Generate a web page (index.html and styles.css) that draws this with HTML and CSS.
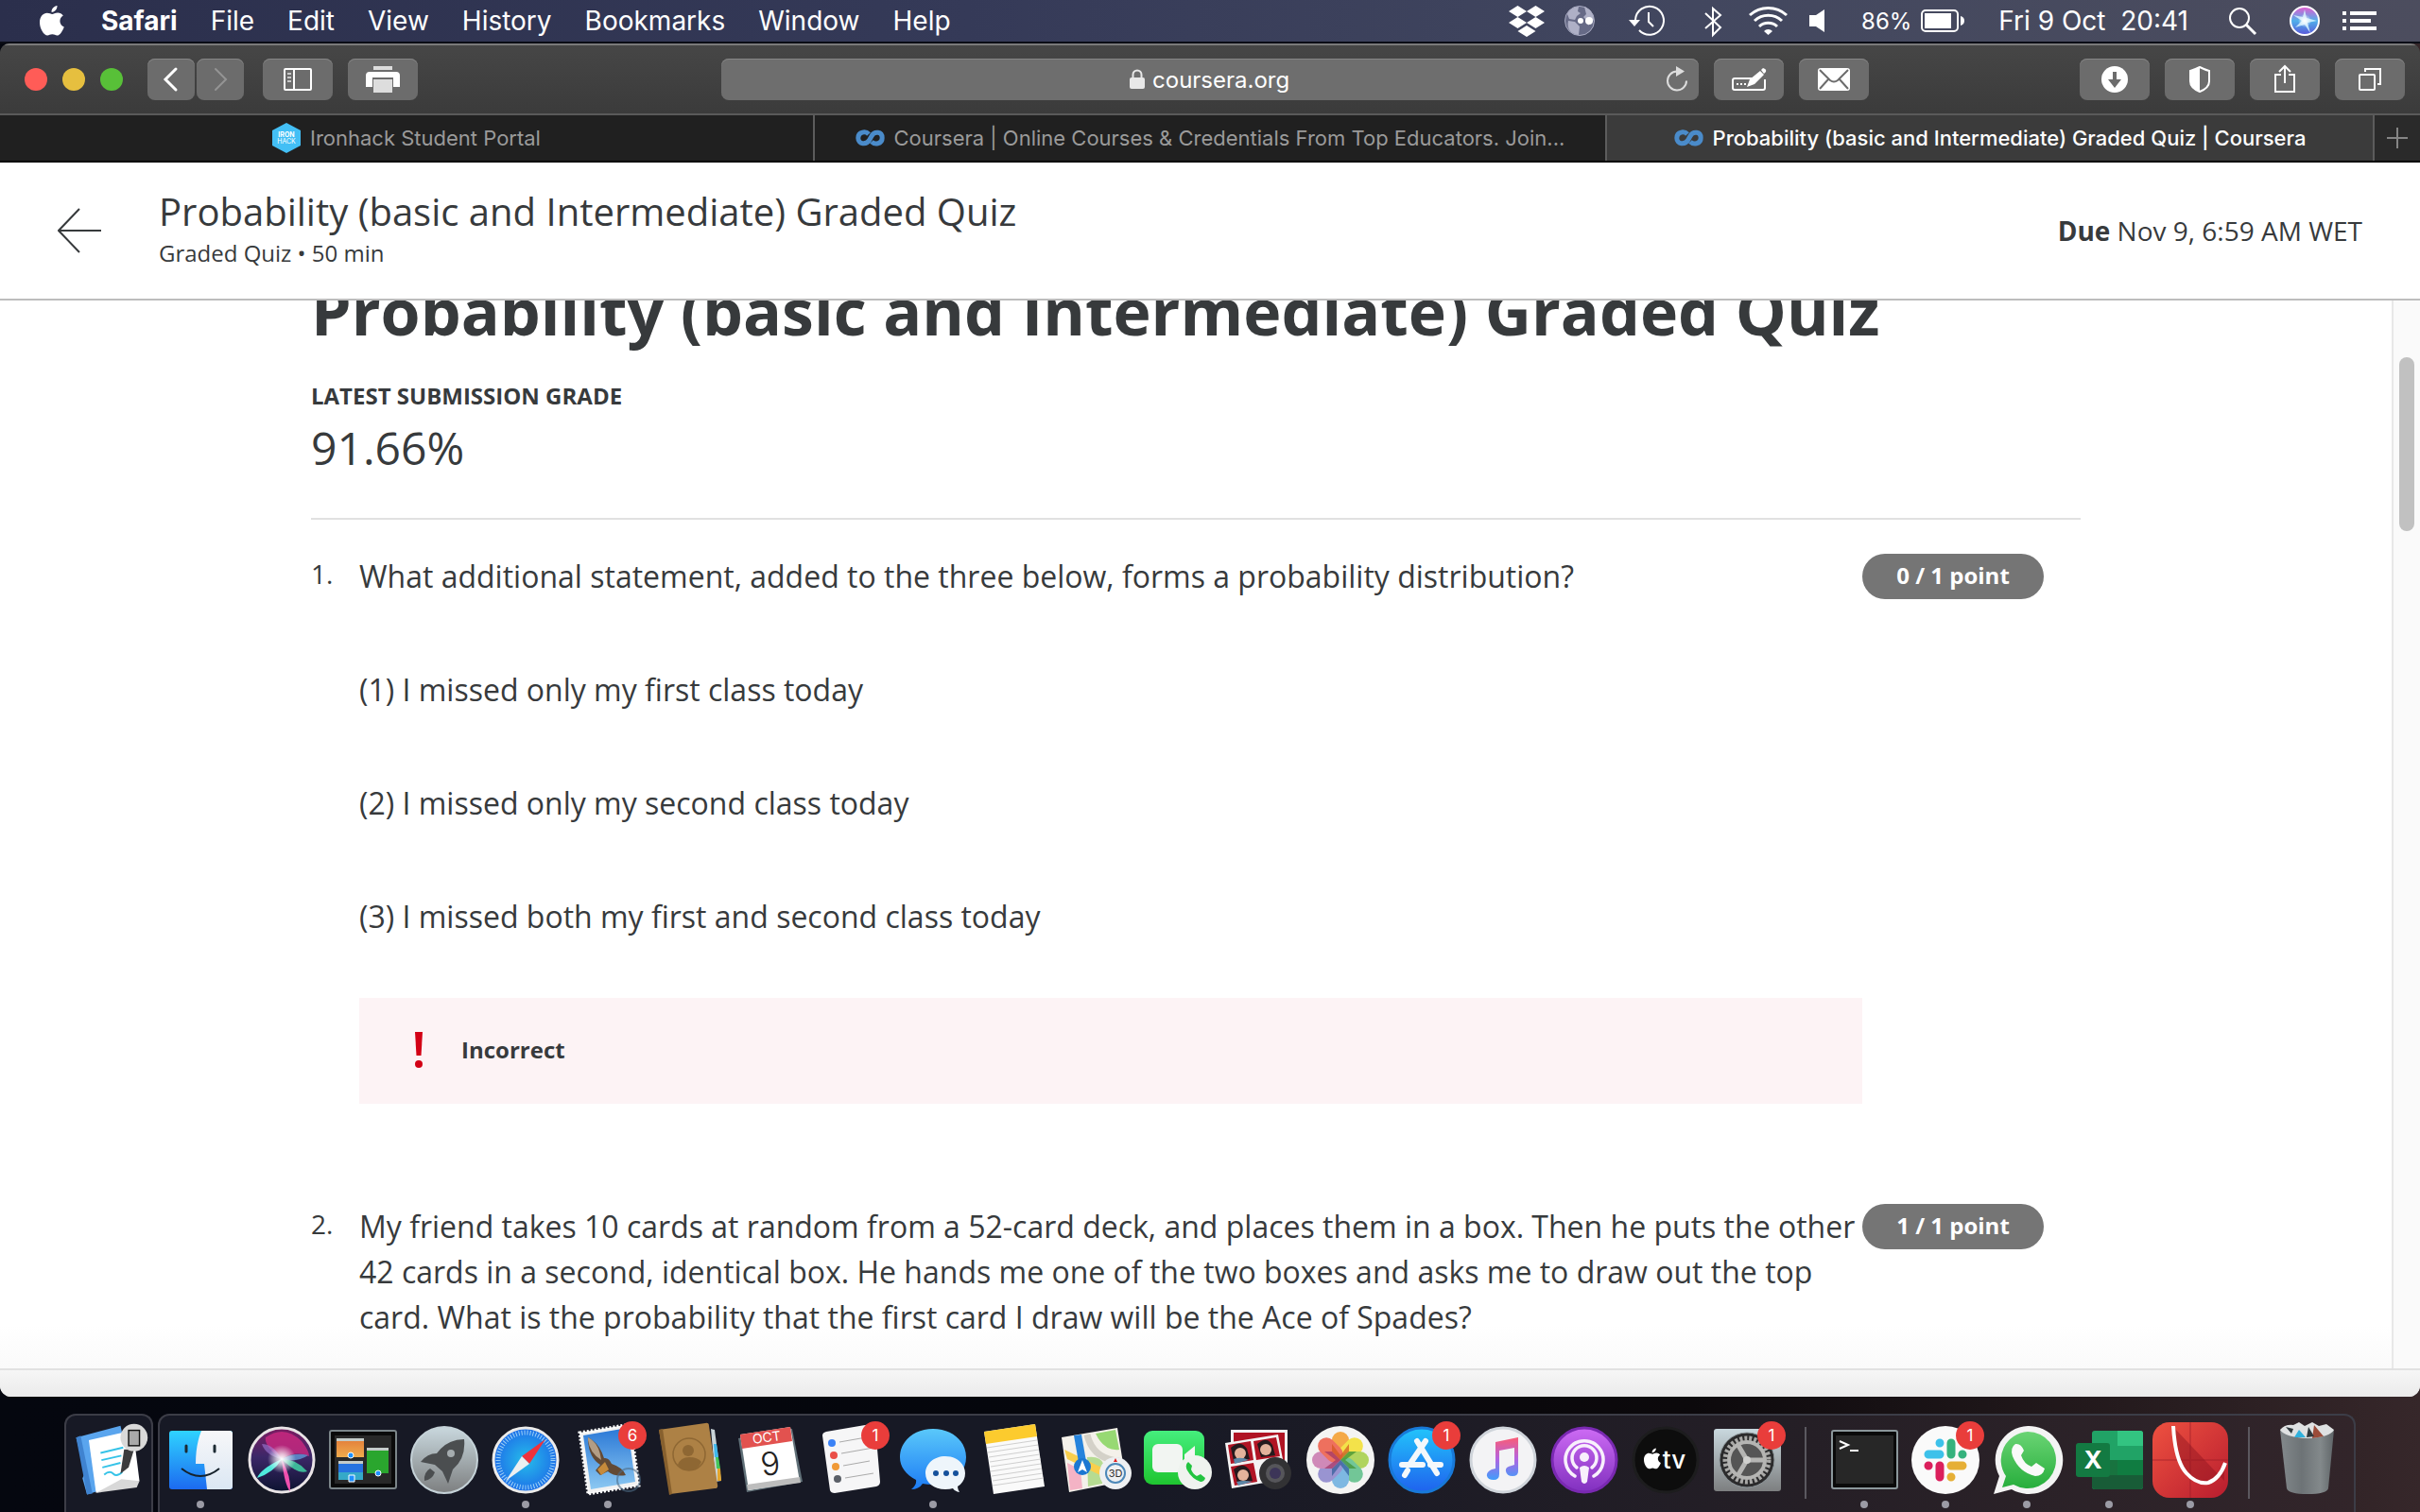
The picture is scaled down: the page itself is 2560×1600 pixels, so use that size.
FILE: index.html
```html
<!DOCTYPE html>
<html lang="en">
<head>
<meta charset="utf-8">
<title>Probability (basic and Intermediate) Graded Quiz | Coursera</title>
<link rel="stylesheet" href="styles.css">
</head>
<body>
<svg class="defs" aria-hidden="true">
  <defs>
    <symbol id="coursera" viewBox="0 0 31 18"><path d="M14 5C11 1.500 2.800 2 2.800 9s9 7.500 12 2L17 7C20 1.500 28.200 2 28.200 9S20 16 17 13" fill="none" stroke="#4a8bca" stroke-width="5"/></symbol>
    <symbol id="apple" viewBox="0 0 26 32"><path d="M18.500 0c.3 3.600-2.800 7-6 6.800C12.200 3.500 15.300.4 18.500 0zM13.200 9c1.300 0 3-1.500 6-1.500 2.200 0 4.300 1.100 5.600 2.900-5 3-4.200 10 1 12-1.600 4.500-4.500 9.100-7.400 9.100-1.900 0-2.700-1.200-5.100-1.200S10 31.500 8.200 31.500C4.500 31.500 0 24.500 0 17.800c0-6.500 4-10 7.700-10C10.200 7.800 12 9 13.200 9z" fill="#fff"/></symbol>
    <linearGradient id="gFinder" x1="0" y1="0" x2="0" y2="1"><stop offset="0" stop-color="#2fd3ff"/><stop offset="1" stop-color="#1c6af0"/></linearGradient>
    <linearGradient id="gFace" x1="0" y1="0" x2="0" y2="1"><stop offset="0" stop-color="#f7f7f9"/><stop offset="1" stop-color="#dbe7f3"/></linearGradient>
    <linearGradient id="gGrey" x1="0" y1="0" x2="0" y2="1"><stop offset="0" stop-color="#c9d8de"/><stop offset="1" stop-color="#7d7f80"/></linearGradient>
    <radialGradient id="gSafari"><stop offset="0" stop-color="#25bdea"/><stop offset="1" stop-color="#1e6fe8"/></radialGradient>
    <linearGradient id="gSiri" x1="0" y1="0" x2="0" y2="1"><stop offset="0" stop-color="#7c1c62"/><stop offset=".45" stop-color="#3c2768"/><stop offset="1" stop-color="#0c1330"/></linearGradient>
    <radialGradient id="gGlow"><stop offset="0" stop-color="#fff"/><stop offset=".35" stop-color="#fff" stop-opacity=".7"/><stop offset="1" stop-color="#fff" stop-opacity="0"/></radialGradient>
    <linearGradient id="gSiriSmall" x1="0" y1="0" x2="0" y2="1"><stop offset="0" stop-color="#e75ad0"/><stop offset=".5" stop-color="#4fb0ea"/><stop offset="1" stop-color="#5a55d8"/></linearGradient>
    <linearGradient id="gBlue" x1="0" y1="0" x2="0" y2="1"><stop offset="0" stop-color="#5ac8fa"/><stop offset="1" stop-color="#1d7cf5"/></linearGradient>
    <linearGradient id="gStore" x1="0" y1="0" x2="0" y2="1"><stop offset="0" stop-color="#22c4fb"/><stop offset="1" stop-color="#1f62ee"/></linearGradient>
    <linearGradient id="gGreen" x1="0" y1="0" x2="0" y2="1"><stop offset="0" stop-color="#45ee7d"/><stop offset="1" stop-color="#1fc530"/></linearGradient>
    <linearGradient id="gWhats" x1="0" y1="0" x2="0" y2="1"><stop offset="0" stop-color="#6ad474"/><stop offset="1" stop-color="#27ae3c"/></linearGradient>
    <linearGradient id="gPod" x1="0" y1="0" x2="0" y2="1"><stop offset="0" stop-color="#cd6bf4"/><stop offset="1" stop-color="#8130bf"/></linearGradient>
    <linearGradient id="gNote" x1="0" y1="0" x2="0" y2="1"><stop offset="0" stop-color="#fb5c74"/><stop offset=".5" stop-color="#b463e0"/><stop offset="1" stop-color="#3f9dfb"/></linearGradient>
    <linearGradient id="gRed" x1="0" y1="0" x2="1" y2="1"><stop offset="0" stop-color="#ee5140"/><stop offset="1" stop-color="#b81d2e"/></linearGradient>
    <linearGradient id="gOrange" x1="0" y1="0" x2="0" y2="1"><stop offset="0" stop-color="#e27c39"/><stop offset="1" stop-color="#f0ac4d"/></linearGradient>
    <linearGradient id="gSky" x1="0" y1="0" x2="0" y2="1"><stop offset="0" stop-color="#2a78d6"/><stop offset="1" stop-color="#8cc8f2"/></linearGradient>
    <linearGradient id="gTrash" x1="0" y1="0" x2="1" y2="0"><stop offset="0" stop-color="#83898c"/><stop offset=".4" stop-color="#6d7376"/><stop offset=".75" stop-color="#83898b"/><stop offset="1" stop-color="#5f6568"/></linearGradient>
  </defs>
</svg>

<header class="menubar">
  <nav class="menus" aria-label="Menu bar">
    <button class="apple-menu" aria-label="Apple"><svg class="apple"><use href="#apple"/></svg></button>
    <button class="app-name">Safari</button>
    <button>File</button>
    <button>Edit</button>
    <button>View</button>
    <button>History</button>
    <button>Bookmarks</button>
    <button>Window</button>
    <button>Help</button>
  </nav>
  <div class="status">
    <svg width="58" height="44" viewBox="0 0 58 44" fill="#fff"><path d="M10 12l9.500-6 9.500 6-9.500 6zM29 12l9.500-6 9.500 6-9.500 6zM10 24l9.500-6 9.500 6-9.500 6zM29 24l9.500-6 9.500 6-9.500 6zM19.500 33l9.500-6 9.500 6-9.500 6z"/></svg>
    <svg width="55" height="44" viewBox="0 0 55 44"><circle cx="27" cy="22" r="15.500" fill="#666a86" stroke="#a9abc2"/><path d="M14 15c2-5 7-8 12-8l-1 5 3 2-4 3-2 4-6-1zM15 22l7 1 5 5-1 9C18 36 13 31 15 22zM32 7c6 2 10 8 10 14l-6 6-1-5-4-4 3-3z" fill="#aeb0c6"/><circle cx="28" cy="22" r="3" fill="#fff"/><circle cx="37" cy="22" r="4" fill="#fff"/></svg>
    <svg width="91" height="44" viewBox="0 0 91 44" fill="none" stroke="#fff" stroke-width="2"><path d="M31 21a15 15 0 1 1 4 11"/><path d="M24 21h12l-6 7z" fill="#fff" stroke="none"/><path d="M45 13v10l5 5"/></svg>
    <svg width="52" height="44" viewBox="0 0 52 44" fill="none" stroke="#fff" stroke-width="2"><path d="M14 14l16 15-8 8V9l8 7-16 14"/></svg>
    <svg width="62" height="44" viewBox="0 0 62 44" fill="none" stroke="#fff" stroke-width="3"><path d="M9 16a29 29 0 0 1 39 0M14 22a21 21 0 0 1 29 0M19 28a14 14 0 0 1 19 0"/><path d="M24 33a6 6 0 0 1 9 0l-4.500 4z" fill="#fff" stroke="none"/></svg>
    <svg width="65" height="44" viewBox="0 0 65 44" fill="#fff"><path d="M10 16h7l9-6v24l-9-6h-7z"/></svg>
    <span class="percent">86%</span>
    <svg width="48" height="44" viewBox="0 0 48 44"><rect x="1" y="11" width="38" height="22" rx="4" fill="none" stroke="#fff" stroke-width="2"/><path d="M4 14h28v16H4z" fill="#fff"/><path d="M42 17q4 1 4 5t-4 5z" fill="#fff"/></svg>
    <time class="clock">Fri 9 Oct&nbsp; 20:41</time>
    <svg width="75" height="44" viewBox="0 0 75 44" fill="none" stroke="#fff"><circle cx="34" cy="19" r="10" stroke-width="2"/><path d="M41 26l10 10" stroke-width="3"/></svg>
    <svg width="56" height="44" viewBox="0 0 56 44"><circle cx="28" cy="22" r="15" fill="url(#gSiriSmall)" stroke="#fff" stroke-width="2"/><path d="M28 10l2 9 11 3-10 2 3 11-6-9-10 3 7-7-9-6 10 2z" fill="#d5f3ff" opacity=".85"/><circle cx="28" cy="22" r="7" fill="url(#gGlow)"/></svg>
    <svg width="60" height="44" viewBox="0 0 60 44" fill="#fff"><path d="M12 12h4v4h-4zM20 12h28v4H20zM12 20h4v4h-4zM20 20h22v4H20zM12 28h4v4h-4zM20 28h28v4H20z"/></svg>
  </div>
</header>

<main class="window">
  <div class="toolbar">
    <div class="lights"><button class="close" aria-label="Close"></button><button class="minimise" aria-label="Minimise"></button><button class="zoom" aria-label="Zoom"></button></div>
    <div class="history">
      <button class="tool half" aria-label="Back"><svg width="50" height="44" viewBox="0 0 50 44" fill="none" stroke="#fff" stroke-width="3" stroke-linecap="round"><path d="M30 11L19 22l11 11"/></svg></button>
      <button class="tool half" aria-label="Forward"><svg width="50" height="44" viewBox="0 0 50 44" fill="none" stroke="#949494" stroke-width="2" stroke-linecap="round"><path d="M20 11l11 11-11 11"/></svg></button>
    </div>
    <div class="group">
      <button class="tool" aria-label="Sidebar"><svg width="74" height="44" viewBox="0 0 74 44" fill="none" stroke="#fff" stroke-width="2"><rect x="23" y="11" width="28" height="22" rx="1"/><path d="M33 11v22"/><path d="M26 16h4M26 20h4M26 24h4" stroke="#c8c8c8"/></svg></button>
      <button class="tool" aria-label="Print"><svg width="74" height="44" viewBox="0 0 74 44"><path d="M27 8h20v4H27z" fill="#ddd"/><path d="M23 14h28q4 0 4 4v12h-7V20H26v10h-7V18q0-4 4-4z" fill="#fff"/><path d="M27 22h20v14H27z" fill="#ddd"/></svg></button>
    </div>
    <div class="space-left"></div>
    <div class="address">
      <svg width="16" height="22" viewBox="0 0 16 22"><rect y="9" width="16" height="12" rx="2" fill="#e8e8e8"/><path d="M3.500 10V6a4.500 4.500 0 0 1 9 0v4" fill="none" stroke="#e8e8e8" stroke-width="2"/></svg>
      <input type="text" value="coursera.org" aria-label="Address">
      <button class="reload" aria-label="Reload"><svg width="24" height="28" viewBox="0 0 24 28"><path d="M12 5.500a10 10 0 1 0 10 10" fill="none" stroke="#ddd" stroke-width="2"/><path d="M11 0l9 5.500-9 5.500z" fill="#ddd"/></svg></button>
    </div>
    <div class="group extensions">
      <button class="tool" aria-label="Fill form"><svg width="74" height="44" viewBox="0 0 74 44" fill="none" stroke="#fff" stroke-width="2"><path d="M41 21H22q-2 0-2 2v8q0 2 2 2h30q2 0 2-2v-9"/><path d="M24 27h2M28 27h2M32 27h2"/><path d="M35 30l3-8 11-9 4 4-10 10zM50 12l2-2q4 1 3 4l-2 2z" fill="#fff" stroke="none"/></svg></button>
      <button class="tool" aria-label="Mail"><svg width="74" height="44" viewBox="0 0 74 44"><rect x="20" y="10" width="34" height="24" rx="3" fill="#fff"/><path d="M22 12l11 11q4 3 8 0l11-11M22 32l9-10M52 32l-9-10" fill="none" stroke="#6c6c6c" stroke-width="2"/></svg></button>
    </div>
    <div class="space-right"></div>
    <div class="group">
      <button class="tool" aria-label="Downloads"><svg width="74" height="44" viewBox="0 0 74 44"><circle cx="37" cy="22" r="14" fill="#fff"/><path d="M35 14h4v8h5l-7 9-7-9h5z" fill="#6c6c6c"/></svg></button>
      <button class="tool" aria-label="Privacy"><svg width="74" height="44" viewBox="0 0 74 44"><path d="M37 9q6 3 10 4v11q0 7-10 11-10-4-10-11V13q4-1 10-4z" fill="none" stroke="#fff" stroke-width="2"/><path d="M37 9v26q-10-4-10-11V13q4-1 10-4z" fill="#fff"/></svg></button>
      <button class="tool" aria-label="Share"><svg width="74" height="44" viewBox="0 0 74 44" fill="none" stroke="#fff" stroke-width="2"><path d="M33 17h-6v18h20V17h-6M37 26V8M31 14l6-6 6 6"/></svg></button>
      <button class="tool" aria-label="Show tabs"><svg width="74" height="44" viewBox="0 0 74 44" fill="none" stroke="#fff" stroke-width="2"><rect x="26" y="17" width="16" height="16" rx="1"/><path d="M32 14v-3h16v16h-3"/></svg></button>
    </div>
  </div>

  <nav class="tabs" aria-label="Tabs">
    <a class="tab first" href="#"><svg width="30" height="32" viewBox="0 0 30 32"><path d="M15 0l15 8v16l-15 8L0 24V8z" fill="#43bff5"/><text x="15" y="15" class="favtext bold">IRON</text><text x="15" y="22" class="favtext">HACK</text></svg><span>Ironhack Student Portal</span></a>
    <a class="tab second" href="#"><svg width="31" height="18"><use href="#coursera"/></svg><span>Coursera | Online Courses &amp; Credentials From Top Educators. Join...</span></a>
    <a class="tab third active" href="#"><svg width="31" height="18"><use href="#coursera"/></svg><span>Probability (basic and Intermediate) Graded Quiz | Coursera</span></a>
    <button class="new-tab" aria-label="New tab"><svg width="22" height="22" viewBox="0 0 22 22" stroke="#858585" stroke-width="2"><path d="M11 0v22M0 11h22"/></svg></button>
  </nav>

  <div class="page">
    <header class="quiz-header">
      <a class="back" href="#" aria-label="Back"><svg width="46" height="48" viewBox="0 0 46 48" fill="none" stroke="#373a3c" stroke-width="2"><path d="M23 1L1 24l22 23M1 24h45"/></svg></a>
      <div class="quiz-title">
        <p class="name">Probability (basic and Intermediate) Graded Quiz</p>
        <p class="meta">Graded Quiz • 50 min</p>
      </div>
      <p class="due"><b>Due</b> Nov 9, 6:59 AM WET</p>
    </header>
    <div class="scroller">
      <section class="quiz">
        <h1>Probability (basic and Intermediate) Graded Quiz</h1>
        <h2>LATEST SUBMISSION GRADE</h2>
        <p class="grade">91.66%</p>
        <hr>
        <article class="question">
          <span class="number">1.</span>
          <div class="prompt">
            <p>What additional statement, added to the three below, forms a probability distribution?</p>
            <p>(1) I missed only my first class today</p>
            <p>(2) I missed only my second class today</p>
            <p>(3) I missed both my first and second class today</p>
            <div class="feedback"><svg width="10" height="38" viewBox="0 0 10 38" fill="#d30015"><path d="M1 0h8L7.500 25h-5z"/><circle cx="5" cy="34" r="4"/></svg><strong>Incorrect</strong></div>
          </div>
          <span class="points">0 / 1 point</span>
        </article>
        <article class="question">
          <span class="number">2.</span>
          <div class="prompt">
            <p>My friend takes 10 cards at random from a 52-card deck, and places them in a box. Then he puts the other 42 cards in a second, identical box. He hands me one of the two boxes and asks me to draw out the top card. What is the probability that the first card I draw will be the Ace of Spades?</p>
          </div>
          <span class="points">1 / 1 point</span>
        </article>
      </section>
      <div class="scrollbar"><div class="thumb"></div></div>
    </div>
    <div class="page-foot"></div>
  </div>
</main>

<footer class="dock">
  <div class="tray handoff">
    <button aria-label="Pages from another device"><svg width="90" height="100" viewBox="0 0 94 100"><path d="M11 21l49-13 14 60-51 16-5-18 3-6z" fill="#5aa5ee"/><path d="M11 21l5-2 13 64-6 1z" fill="#3f83d0"/><path d="M25 24l49-11 7 56-48 13z" fill="#fff"/><path d="M33 82l28-15 20 2-3 7z" fill="#d8d8d8"/><path d="M38 38l25-6M39 46l22-5M40 54l20-5M42 62q6-5 10-1t10-2" fill="none" stroke="#35c3e8" stroke-width="2"/><path d="M64 34h11l-6 20-9 7z" fill="#3c3c3e"/><circle cx="75" cy="21" r="15" fill="#d9d9d9"/><rect x="69" y="13" width="12" height="17" fill="#a9a9a9" stroke="#111" stroke-width="1.500"/></svg></button>
  </div>
  <div class="tray apps">
    <button class="running" aria-label="Finder"><svg viewBox="0 0 86 100"><rect x="10" y="16" width="67" height="62" rx="3" fill="url(#gFinder)"/><path d="M44 16h30q3 0 3 3v56q0 3-3 3H50l-3-27H38q0-20 6-35z" fill="url(#gFace)"/><path d="M28 32v6M58 32v6" stroke="#1c2a33" stroke-width="3" stroke-linecap="round"/><path d="M23 56q20 16 40 0" fill="none" stroke="#16222b" stroke-width="2"/></svg></button>
    <button aria-label="Siri"><svg viewBox="0 0 86 100"><circle cx="43" cy="47" r="34" fill="url(#gSiri)" stroke="#e9e4e6" stroke-width="3"/><path d="M43 46Q24 32 26 23q20-14 38 4 8 10 8 16-14-6-29 3z" fill="#d42a83" opacity=".75"/><path d="M43 46Q26 42 22 30q12 0 21 16z" fill="#a07bd8" opacity=".6"/><path d="M43 46q-8 14-26 20 4-10 26-20z" fill="#4fe8dc"/><path d="M43 46q16 0 27 13-10 4-27-13z" fill="#3fc8a0" opacity=".9"/><path d="M43 46q10 18 9 34-6-6-9-34z" fill="#ef4fae"/><path d="M43 46q14-8 28-4-12 8-28 4z" fill="#67a8e8" opacity=".7"/><circle cx="43" cy="46" r="15" fill="url(#gGlow)"/></svg></button>
    <button aria-label="Mission Control"><svg viewBox="0 0 86 100"><rect x="8" y="16" width="70" height="61" rx="2" fill="#0a0a0a" stroke="#7b8589" stroke-width="2"/><path d="M13 21h60v51H13z" fill="#282828"/><path d="M15 24h29v20H15z" fill="url(#gOrange)"/><path d="M47 34h23v27H47z" fill="#2aa62e"/><path d="M17 48h26v20H17z" fill="#2673e0"/><path d="M17 60h26v8H17z" fill="#35a9c8"/><path d="M15 24h29v3H15zM47 34h23v3H47zM17 48h26v3H17z" fill="#c4ccc9"/><circle cx="30" cy="42" r="3" fill="#1e90ff" stroke="#fff"/><circle cx="59" cy="61" r="3" fill="#1e90ff" stroke="#fff"/><path d="M28 63h6v7h-6z" fill="#1e90ff" stroke="#fff"/></svg></button>
    <button aria-label="Launchpad"><svg viewBox="0 0 86 100"><circle cx="43" cy="47" r="35" fill="url(#gGrey)" stroke="#c5d2d8" stroke-width="2"/><path d="M64 25q2 20-12 32l-5 15-6-13-8-7-15-3q7-9 17-9 11-15 29-15z" fill="#4b4e50"/><path d="M28 56q-7 4-6 13 8-1 11-9z" fill="#4b4e50"/><circle cx="50" cy="40" r="4" fill="#a5acaf"/></svg></button>
    <button class="running" aria-label="Safari"><svg viewBox="0 0 86 100"><circle cx="43" cy="47" r="34" fill="url(#gSafari)" stroke="#ecebe9" stroke-width="3"/><circle cx="43" cy="47" r="29" fill="none" stroke="#9fd2f8" stroke-width="5" stroke-dasharray="1 2"/><path d="M64 25L39 43l8 8z" fill="#f0323c"/><path d="M22 69l17-26 8 8z" fill="#eceff1"/></svg></button>
    <button class="running" aria-label="Mail, 6 unread"><svg viewBox="0 0 86 100"><path d="M13 18l54-9 9 65-54 9z" fill="#f2f2f2" stroke="#fff" stroke-width="3" stroke-dasharray="2 2"/><path d="M17 21l47-8 8 57-47 8z" fill="url(#gSky)"/><path d="M22 23q12 6 17 22 5-1 8 6 12 4 15 12-12 2-19-4l-8 4-5-5 5-6Q22 44 22 23z" fill="#634a35"/><path d="M22 23q12 6 14 24Q22 38 22 23z" fill="#b39d85"/><path d="M32 57l8-8 4 8-8 6z" fill="#c68a3b"/><circle cx="65" cy="68" r="12" fill="none" stroke="#4d6b86" opacity=".6" stroke-width="2"/><circle cx="69" cy="21" r="15" fill="#e93d3b"/><text x="69" y="27" class="badge">6</text></svg></button>
    <button aria-label="Contacts"><svg viewBox="0 0 86 100"><path d="M66 14l4 1 7 54-6 1z" fill="#c9d4d8"/><path d="M69 30l3 0 2 14-4 0z" fill="#3fb8ec"/><path d="M71 44l3 0 2 12-4 0z" fill="#45c658"/><path d="M73 56l3 0 1 13-4 0z" fill="#e2a52d"/><path d="M11 15l49-7q4-1 4 3l9 62q1 4-3 4l-47 6z" fill="#ad8145"/><path d="M11 15l4-1 10 69-3 1z" fill="#87602e"/><circle cx="43" cy="41" r="17" fill="none" stroke="#8e6733" stroke-width="1.500"/><circle cx="42" cy="37" r="6" fill="#8e6733"/><path d="M31 52q3-8 12-8t13 5q-4 9-13 9-8 0-12-6z" fill="#8e6733"/></svg></button>
    <button aria-label="Calendar"><svg viewBox="0 0 86 100"><path d="M9 24l57-10 11 56-59 11z" fill="#607078"/><path d="M11 20l53-8 10 58-54 9z" fill="#fff"/><path d="M18 73l56-8 1 6-56 8z" fill="#bdbdbd"/><path d="M11 20l53-8 2 15-53 8z" fill="#e2524f"/><text x="39" y="28" class="cal-month" transform="rotate(-8 39 24)">OCT</text><text x="43" y="63" class="cal-day" transform="rotate(-8 43 52)">9</text></svg></button>
    <button aria-label="Reminders, 1 due"><svg viewBox="0 0 86 100"><path d="M16 17l47-8q4-1 5 3l5 58q0 4-4 5l-44 7q-4 0-5-3L12 21q0-3 4-4z" fill="#f6f6f7"/><path d="M30 28l34-6M32 40l34-6M34 53l28-5M36 66l30-5" stroke="#aaa" stroke-width="1"/><circle cx="22" cy="29" r="4" fill="#3b82f6"/><circle cx="24" cy="42" r="4" fill="#ea4f48"/><circle cx="26" cy="54" r="4" fill="#f09a37"/><circle cx="28" cy="67" r="4" fill="#5b6068"/><circle cx="68" cy="21" r="15" fill="#e93d3b"/><text x="68" y="27" class="badge">1</text></svg></button>
    <button class="running" aria-label="Messages"><svg viewBox="0 0 86 100"><path d="M43 14c20 0 35 13 35 30S63 73 43 73q-6 0-11-1-4 6-12 6 6-5 5-10C14 62 8 54 8 44c0-17 15-30 35-30z" fill="url(#gBlue)"/><path d="M56 43c12 0 21 8 21 18 0 6-3 11-8 14q0 3 2 6-5-1-7-4-3 1-8 1c-12 0-21-7-21-17s9-18 21-18z" fill="#eef5fb"/><g fill="#15519c"><circle cx="46" cy="61" r="3"/><circle cx="57" cy="61" r="3"/><circle cx="67" cy="61" r="3"/></g></svg></button>
    <button aria-label="Notes"><svg viewBox="0 0 86 100"><path d="M11 17l54-8 10 66-54 8z" fill="#fafafa"/><path d="M11 17l54-8 2 13-54 8z" fill="#fccb2e"/><path d="M14 34l53-8M15 39l53-8M16 44l53-8M17 49l53-8M18 54l53-8M18 59l53-8M19 64l53-8M20 69l53-8M20 74l54-8" stroke="#cfcfcf"/></svg></button>
    <button aria-label="Maps"><svg viewBox="0 0 86 100"><path d="M7 23l59-10 9 56-60 12z" fill="#f4f1ea"/><path d="M43 19l21-4 4 21q-16 2-25-17z" fill="#97d973"/><path d="M34 44q14-2 18 8l-2 20-15 3z" fill="#b6dc92"/><path d="M10 36l50 24-2 8L13 46z" fill="#f9cf4d"/><path d="M13 50l14 7 2 20-13 2z" fill="#f4b3c5"/><path d="M20 21l8-1 6 34-8 1z" fill="#2583dc"/><path d="M34 20q6 26 34 28" fill="none" stroke="#d4d1c8" stroke-width="7"/><circle cx="29" cy="54" r="9" fill="#1a77d2"/><path d="M29 47l5 13-5-3-5 3z" fill="#fff"/><circle cx="64" cy="61" r="17" fill="#eef0f2"/><circle cx="64" cy="61" r="10" fill="none" stroke="#4c88b8" stroke-width="2"/><path d="M62 49l2-4 2 4z" fill="#e02020"/><text x="64" y="65" class="map-3d">3D</text></svg></button>
    <button aria-label="FaceTime"><svg viewBox="0 0 86 100"><rect x="8" y="16" width="64" height="57" rx="9" fill="url(#gGreen)"/><rect x="17" y="30" width="32" height="30" rx="6" fill="#f2f5f2"/><path d="M51 41l11-9v22l-11-6z" fill="#f2f5f2"/><circle cx="62" cy="60" r="18" fill="#eff3ef"/><path d="M55 49q-4 3-1 9 5 9 14 12 4 0 5-4l-5-4-4 2q-4-2-6-7l1-4z" fill="#22c440"/></svg></button>
    <button aria-label="Photo Booth"><svg viewBox="0 0 86 100"><path d="M14 15h60v50H14z" fill="#f2f2f2"/><path d="M17 18h54v44H17z" fill="#b01424"/><path d="M8 29l56-9 9 47-58 10z" fill="#f4f4f4"/><path d="M11 31l24-4 3 20-24 4zM38 27l24-4 4 20-25 4zM14 54l24-4 4 20-24 4z" fill="#b01424"/><g fill="#241a1d"><path d="M14 34q10-9 17 1l3 11-17 2zM42 30q10-9 16 1l3 11-15 2zM17 57q10-9 17 1l3 11-16 2z"/></g><g fill="#e3b29b"><circle cx="24" cy="40" r="6"/><circle cx="51" cy="36" r="6"/><circle cx="27" cy="63" r="6"/></g><path d="M17 46q8-3 16 1l-15 4zM20 70q8-2 17 0l-15 4z" fill="#5d87a7"/><circle cx="61" cy="61" r="17" fill="#323234"/><circle cx="61" cy="61" r="10" fill="#56565a"/><circle cx="61" cy="61" r="6" fill="#3c3558"/></svg></button>
    <button aria-label="Photos"><svg viewBox="0 0 86 100"><circle cx="43" cy="47" r="36" fill="#f4f4f3"/><g opacity=".85"><rect x="34" y="17" width="18" height="30" rx="9" fill="#f59d2a"/><rect x="34" y="17" width="18" height="30" rx="9" fill="#f3e02d" transform="rotate(45 43 47)"/><rect x="34" y="17" width="18" height="30" rx="9" fill="#a5cf45" transform="rotate(90 43 47)"/><rect x="34" y="17" width="18" height="30" rx="9" fill="#5cbf88" transform="rotate(135 43 47)"/><rect x="34" y="17" width="18" height="30" rx="9" fill="#6aaee0" transform="rotate(180 43 47)"/><rect x="34" y="17" width="18" height="30" rx="9" fill="#8a84cc" transform="rotate(225 43 47)"/><rect x="34" y="17" width="18" height="30" rx="9" fill="#c977ae" transform="rotate(270 43 47)"/><rect x="34" y="17" width="18" height="30" rx="9" fill="#ee5a45" transform="rotate(315 43 47)"/></g><path d="M43 47l-9-9v-8l9 12 9-12v8z" fill="#d3551c" opacity=".7"/><path d="M43 47l9-9h8l-12 9 12 9h-8z" fill="#3f8f2c" opacity=".7"/><path d="M43 47l9 9v8l-9-12-9 12v-8z" fill="#2f5c98" opacity=".7"/><path d="M43 47l-9 9h-8l12-9-12-9h8z" fill="#9c3568" opacity=".7"/></svg></button>
    <button aria-label="App Store, 1 update"><svg viewBox="0 0 86 100"><circle cx="43" cy="47" r="34" fill="url(#gStore)" stroke="#1879d8" stroke-width="3"/><path d="M47 27L30 52M38 27l21 34M22 52h22M52 52h11M28 58l-3 5" fill="none" stroke="#f4f8fb" stroke-width="6" stroke-linecap="round"/><circle cx="69" cy="21" r="15" fill="#e93d3b"/><text x="69" y="27" class="badge">1</text></svg></button>
    <button aria-label="Music"><svg viewBox="0 0 86 100"><circle cx="43" cy="47" r="34" fill="#f3f3f5" stroke="#cfd4da" stroke-width="3"/><path d="M35 28l24-5v36q0 5-6 5t-7-5 6-6l3-1V34l-16 3v25q0 6-6 6t-7-4 5-7l4-1z" fill="url(#gNote)"/></svg></button>
    <button aria-label="Podcasts"><svg viewBox="0 0 86 100"><circle cx="43" cy="47" r="34" fill="url(#gPod)" stroke="#7a29b2" stroke-width="3"/><g fill="none" stroke="#f8f0fc" stroke-width="3.500" stroke-linecap="round"><path d="M33 64a20 20 0 1 1 20 0"/><path d="M35 55a13 13 0 1 1 16 0"/></g><circle cx="43" cy="44" r="5" fill="#f8f0fc"/><path d="M38 55q5-4 10 0l-2 15q-3 4-6 0z" fill="#f8f0fc"/></svg></button>
    <button aria-label="TV"><svg viewBox="0 0 86 100"><circle cx="43" cy="47" r="34" fill="#0d0d0d" stroke="#1d1d1e" stroke-width="3"/><use href="#apple" x="20" y="34" width="18" height="23"/><text x="52" y="56" class="tv">tv</text></svg></button>
    <button aria-label="System Preferences, 1 update"><svg viewBox="0 0 86 100"><rect x="8" y="14" width="71" height="66" rx="3" fill="url(#gGrey)"/><circle cx="43" cy="47" r="29" fill="#2b2b2c" stroke="#8e979b"/><circle cx="43" cy="47" r="23" fill="none" stroke="#a9a9a7" stroke-width="5" stroke-dasharray="3 2"/><circle cx="43" cy="47" r="19" fill="#555" stroke="#b5b5b3" stroke-width="4"/><path d="M43 47h20M43 47L33 30M43 47L33 64" stroke="#b5b5b3" stroke-width="5"/><circle cx="43" cy="47" r="4" fill="#d0d0ce"/><circle cx="69" cy="21" r="15" fill="#e93d3b"/><text x="69" y="27" class="badge">1</text></svg></button>
    <span class="divider"></span>
    <button class="running" aria-label="Terminal"><svg viewBox="0 0 86 100"><rect x="9" y="16" width="69" height="61" rx="2" fill="#0a0a0a" stroke="#8b979b" stroke-width="2"/><path d="M13 21h61v51H13z" fill="#272727"/><path d="M17 27l9 4-9 4M28 37h9" fill="none" stroke="#fff" stroke-width="2"/></svg></button>
    <button class="running" aria-label="Slack, 1 new"><svg viewBox="0 0 86 100"><circle cx="43" cy="47" r="36" fill="#fafafa"/><g stroke-width="9" stroke-linecap="round"><path d="M25 41h12M37 29v.1" stroke="#3dc1ea"/><path d="M49 29v12M61 41h-.1" stroke="#35b27d"/><path d="M61 53H49M49 65v-.1" stroke="#e6af36"/><path d="M37 65V53M25 53h.1" stroke="#db1f5c"/></g><circle cx="69" cy="21" r="15" fill="#e93d3b"/><text x="69" y="27" class="badge">1</text></svg></button>
    <button class="running" aria-label="WhatsApp"><svg viewBox="0 0 86 100"><path d="M44 11a36 36 0 1 1-17 67L8 83l6-19A36 36 0 0 1 44 11z" fill="#f4f4f4"/><path d="M44 17a30 30 0 1 1-15 56l-12 3 4-12a30 30 0 0 1 23-47z" fill="url(#gWhats)"/><path d="M31 30q-6 4-3 13 7 17 24 21 8 0 10-8l-9-6-5 4q-8-3-11-12l3-5q-3-8-9-7z" fill="#fafafa"/></svg></button>
    <button class="running" aria-label="Excel"><svg viewBox="0 0 86 100"><rect x="25" y="16" width="54" height="62" rx="3" fill="#21a366"/><path d="M52 16h24q3 0 3 3v13H52z" fill="#33c481"/><path d="M25 47h54v16H25z" fill="#18733f"/><path d="M25 63h54v12q0 3-3 3H28q-3 0-3-3z" fill="#185c37"/><path d="M52 47h27v16H52z" fill="#107c41"/><rect x="8" y="29" width="36" height="36" rx="3" fill="#137a42"/><text x="26" y="56" class="excel">X</text></svg></button>
    <button class="running" aria-label="Reader"><svg viewBox="0 0 86 100"><rect x="3" y="7" width="80" height="80" rx="18" fill="url(#gRed)"/><path d="M3 47h80M43 7v80" stroke="#9c1d28" stroke-width="2" opacity=".35"/><path d="M26 13l53 56v-12q-6 12-21 14-16-2-26-20z" fill="#8e1520" opacity=".45"/><path d="M25 11q2 37 14 50 11 12 23 10 12-4 18-21" fill="none" stroke="#fff" stroke-width="4"/></svg></button>
    <span class="divider"></span>
    <button aria-label="Trash"><svg viewBox="0 0 86 100"><path d="M14 15h57l-6 62q-2 6-22 6t-22-6z" fill="url(#gTrash)"/><path d="M14 15q5-6 14-5l6-3 6 4 8-4 7 4 8-2 8 6q-4 8-28 9-24-1-29-9z" fill="#dfe1e2"/><path d="M34 15l7 8h-12z" fill="#2fb0dc"/><path d="M50 10l10 12-12 2z" fill="#9b4b39"/><path d="M44 12l6 10-8 1zM20 12l8 2-2 5z" fill="#30393e"/></svg></button>
  </div>
</footer>
</body>
</html>
```
FILE: styles.css
```css
* { box-sizing: border-box; }

body {
  margin: 0;
  height: 100vh;
  display: flex;
  flex-direction: column;
  overflow: hidden;
  font-family: "Open Sans", "Noto Sans", sans-serif;
  color: #373a3c;
  background: linear-gradient(90deg, #05070f 0%, #05060c 45%, #0c090c 70%, #36272a 100%);
}

p, h1, h2 { margin: 0; }
button { padding: 0; border: 0; background: none; color: inherit; font: inherit; }
a { color: inherit; text-decoration: none; }
svg { display: block; flex: none; }
.defs { position: absolute; width: 0; height: 0; }

/* menu bar */
.menubar {
  flex: none;
  height: 46px;
  display: flex;
  justify-content: space-between;
  padding: 0 34px 0 42px;
  border-bottom: 2px solid #0b0d16;
  background: linear-gradient(90deg, #2b2f4c, #353a58 40%, #42475f 70%, #4c4d5e);
  color: #fff;
  font-family: Inter, "Liberation Sans", sans-serif;
  font-size: 28px;
}
.menus { display: flex; align-items: center; gap: 35px; }
.apple-menu { margin-right: 4px; }
.app-name { font-weight: 700; }
.apple { width: 26px; height: 32px; }
.status { display: flex; align-items: center; }
.percent { font-size: 24px; margin-right: 10px; }
.clock { margin: 0 20px 0 34px; }

/* browser window */
.window {
  flex: 1;
  min-height: 0;
  display: flex;
  flex-direction: column;
  overflow: hidden;
  border-radius: 10px 10px 12px 12px;
  background: #404040;
}
.toolbar {
  flex: none;
  height: 76px;
  display: flex;
  align-items: center;
  padding: 0 16px 0 26px;
  border-top: 2px solid #7a7a7a;
  border-bottom: 2px solid #5a5a5a;
  background: linear-gradient(#464646, #3b3b3b);
}
.lights { display: flex; gap: 16px; margin-right: 26px; }
.lights button { width: 24px; height: 24px; border-radius: 50%; }
.close { background: #ff5c57; }
.minimise { background: #e6bf3f; }
.zoom { background: #58c038; }
.history { display: flex; gap: 2px; margin-right: 20px; }
.group { display: flex; gap: 16px; }
.tool {
  width: 74px;
  height: 44px;
  border-radius: 8px;
  background: #6c6c6c;
  box-shadow: inset 0 1px #868686;
}
.half { width: 50px; }
.space-left { flex: 321; }
.space-right { flex: 223; }
.address {
  flex: 1033;
  height: 44px;
  display: flex;
  align-items: center;
  justify-content: center;
  gap: 8px;
  position: relative;
  border-radius: 8px;
  background: #6e6e6e;
  box-shadow: inset 0 1px #868686;
}
.address input {
  width: 146px;
  padding: 0;
  border: 0;
  background: none;
  color: #fff;
  font: 24px Inter, "Liberation Sans", sans-serif;
}
.reload { position: absolute; right: 11px; top: 8px; }
.extensions { margin-left: 16px; }

.tabs {
  flex: none;
  height: 50px;
  display: flex;
  border-bottom: 2px solid #000;
  background: #202020;
  font: 22px Inter, "Liberation Sans", sans-serif;
  color: #9a9a9a;
}
.tab {
  min-width: 0;
  display: flex;
  align-items: center;
  justify-content: center;
  gap: 10px;
  white-space: nowrap;
  border-right: 2px solid #5c5c5c;
}
.first { flex: 862; }
.second { flex: 838; }
.third { flex: 812; }
.active { background: #3b3b3b; color: #fff; font-weight: 500; }
.new-tab { width: 48px; display: flex; align-items: center; justify-content: center; background: #2a2a2a; }
.favtext { font: 7px Inter, sans-serif; fill: #fff; text-anchor: middle; }
.favtext.bold { font-weight: 700; }

/* quiz page */
.page { flex: 1; min-height: 0; display: flex; flex-direction: column; background: #fff; }
.quiz-header {
  flex: none;
  height: 146px;
  display: flex;
  align-items: center;
  padding: 0 61px;
  border-bottom: 2px solid #bdbdbd;
}
.back { width: 107px; }
.quiz-title { flex: 1; padding-bottom: 4px; }
.name { font-size: 40px; line-height: 48px; margin-bottom: 4px; }
.meta { font-size: 24px; line-height: 32px; }
.due { font-size: 28px; line-height: 40px; }

.scroller { flex: 1; min-height: 0; display: flex; overflow: hidden; border-bottom: 2px solid #e1e1e1; }
.quiz {
  flex: 1;
  padding: 0 calc((100% - 1902px) / 2);
  background: linear-gradient(#fff 96%, #fafafa);
}
h1 { margin-top: -29px; font-size: 68px; line-height: 80px; white-space: nowrap; }
h2 { margin-top: 32px; font-size: 24px; line-height: 36px; }
.grade { font-size: 48px; line-height: 74px; }
hr { height: 2px; margin: 37px 0 36px; border: 0; background: #e1e1e1; }
.question {
  display: grid;
  grid-template-columns: 51px minmax(0, 1fr) 192px;
  align-items: start;
  padding-right: 39px;
  margin-bottom: 106px;
}
.number { font-size: 28px; line-height: 43px; }
.prompt { font-size: 32px; line-height: 48px; }
.prompt p + p { margin-top: 72px; }
.feedback {
  height: 112px;
  margin-top: 62px;
  padding: 0 58px 2px;
  display: flex;
  align-items: center;
  gap: 40px;
  background: #fdf3f5;
  font-size: 24px;
}
.points {
  height: 48px;
  border-radius: 24px;
  background: #757575;
  color: #fff;
  font-size: 24px;
  font-weight: 700;
  line-height: 46px;
  text-align: center;
}
.scrollbar { flex: none; width: 30px; padding: 60px 6px 0; border-left: 2px solid #e8e8e8; background: #fafafa; }
.thumb { width: 16px; height: 184px; border-radius: 8px; background: #c1c1c1; }
.page-foot { flex: none; height: 28px; background: linear-gradient(#f6f6f6, #ebebeb); }

/* dock */
.dock { flex: none; height: 122px; display: flex; gap: 5px; padding: 18px 68px 0; }
.tray {
  display: flex;
  border: 2px solid #3c3d47;
  border-bottom: 0;
  border-radius: 12px 12px 0 0;
  background: #171925;
}
.handoff { width: 94px; }
.apps { flex: 1; min-width: 0; padding-right: 6px; background: linear-gradient(90deg, #171925 45%, #251f26 75%, #32252a); }
.apps button { flex: 1; min-width: 0; position: relative; display: flex; justify-content: center; }
.tray svg { height: 100px; }
.apps button > svg { width: 86px; }
.running::after {
  content: "";
  position: absolute;
  left: calc(50% - 4px);
  top: 90px;
  width: 8px;
  height: 8px;
  border-radius: 50%;
  background: #9b9ba5;
}
.divider { width: 2px; height: 76px; margin: 12px 18px 0; background: #5b585f; }
.tray text { font-family: Inter, "Liberation Sans", sans-serif; text-anchor: middle; }
.badge { font-size: 17px; fill: #fff; }
.cal-month { font-size: 14px; fill: #fff; }
.cal-day { font-size: 34px; font-weight: 300; fill: #222; }
.map-3d { font-size: 11px; fill: #333; }
.tv { font-size: 26px; font-weight: 500; fill: #fff; }
.excel { font-size: 26px; font-weight: 700; fill: #fff; }
```
